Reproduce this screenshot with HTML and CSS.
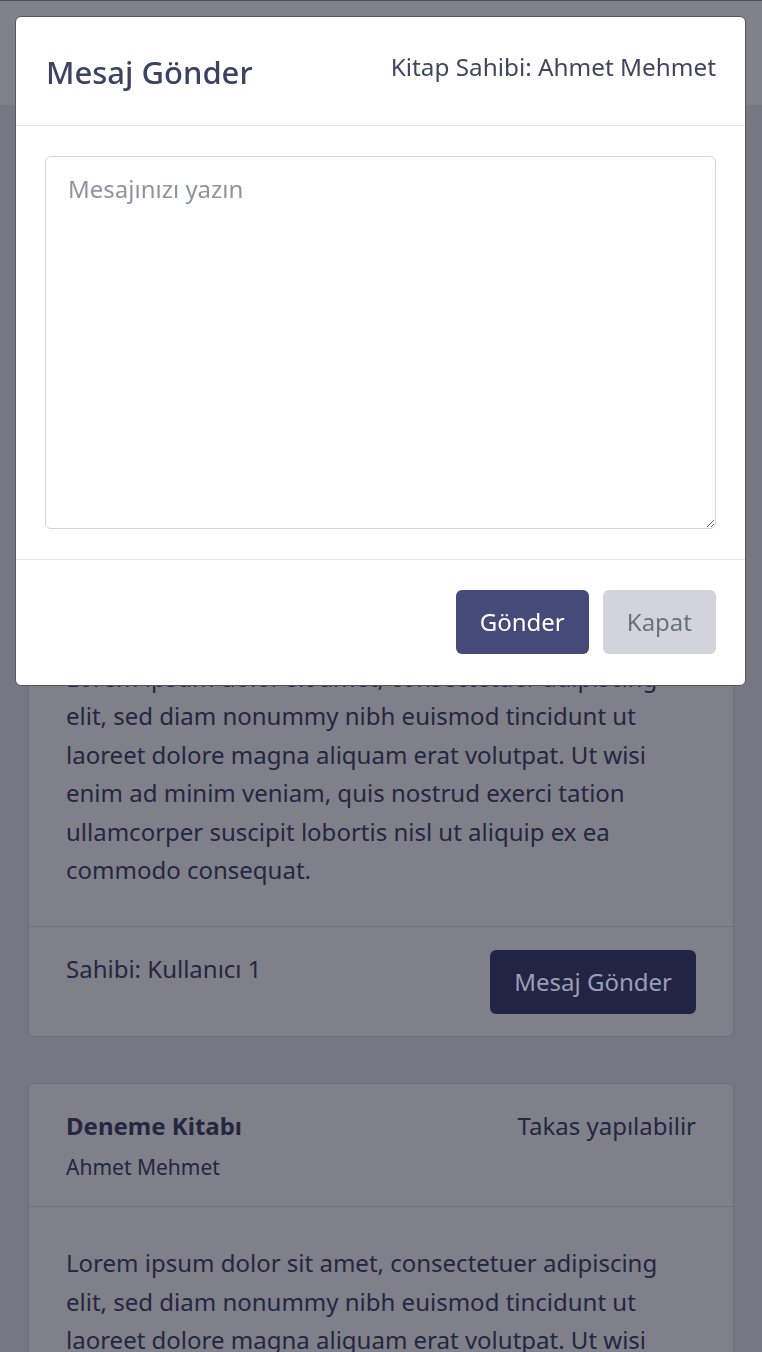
FILE: index.html
```html
<!DOCTYPE html>
<html lang="tr">
<head>
<meta charset="utf-8">
<title>Kitaplar</title>
<link rel="stylesheet" href="styles.css">
</head>
<body>
<header class="topbar"></header>
<main class="list">
  <article class="card">
    <div class="card-head">
      <div>
        <div class="book-title">Deneme Kitabı</div>
        <div class="book-author">Ahmet Mehmet</div>
      </div>
      <div class="book-status">Takas yapılabilir</div>
    </div>
    <div class="card-body">
      <p>Lorem ipsum dolor sit amet, consectetuer adipiscing elit, sed diam nonummy nibh euismod tincidunt ut laoreet dolore magna aliquam erat volutpat. Ut wisi enim ad minim veniam, quis nostrud exerci tation ullamcorper suscipit lobortis nisl ut aliquip ex ea commodo consequat.</p>
    </div>
    <div class="card-foot">
      <span class="owner">Sahibi: Kullanıcı 1</span>
      <button class="btn-dark" type="button">Mesaj Gönder</button>
    </div>
  </article>
  <article class="card">
    <div class="card-head">
      <div>
        <div class="book-title">Deneme Kitabı</div>
        <div class="book-author">Ahmet Mehmet</div>
      </div>
      <div class="book-status">Takas yapılabilir</div>
    </div>
    <div class="card-body">
      <p>Lorem ipsum dolor sit amet, consectetuer adipiscing elit, sed diam nonummy nibh euismod tincidunt ut laoreet dolore magna aliquam erat volutpat. Ut wisi enim ad minim veniam, quis nostrud exerci tation ullamcorper suscipit lobortis nisl ut aliquip ex ea commodo consequat.</p>
    </div>
    <div class="card-foot">
      <span class="owner">Sahibi: Kullanıcı 1</span>
      <button class="btn-dark" type="button">Mesaj Gönder</button>
    </div>
  </article>
</main>

<div class="modal">
  <div class="modal-head">
    <h2 class="modal-title">Mesaj Gönder</h2>
    <div class="modal-owner">Kitap Sahibi: Ahmet Mehmet</div>
  </div>
  <div class="modal-body">
    <textarea class="message" placeholder="Mesajınızı yazın"></textarea>
  </div>
  <div class="modal-foot">
    <button class="btn-primary" type="button">Gönder</button>
    <button class="btn-light" type="button">Kapat</button>
  </div>
</div>
</body>
</html>
```
FILE: styles.css
```css
html { overflow: hidden; }
body {
  margin: 0;
  background: #777784;
  font-family: "Noto Sans", "Open Sans", sans-serif;
  font-size: 24px;
  line-height: 1.6;
  color: #24273f;
}
.topbar {
  height: 104px;
  background: #81818c;
  border-top: 1px solid #4c4c5a;
}
.list {
  padding: 393px 28px 40px;
  display: flex;
  flex-direction: column;
  gap: 46px;
}
.card {
  background: #80808a;
  border: 1px solid #6e6e7b;
  border-radius: 6px;
}
.card-head {
  display: flex;
  justify-content: space-between;
  align-items: flex-start;
  padding: 23px 37px 22px;
  border-bottom: 1px solid #6e6e7b;
}
.book-title { font-weight: 700; }
.book-author { font-size: 21px; margin-top: 5px; }
.card-body { padding: 37px; }
.card-body p { margin: 0; }
.card-foot {
  display: flex;
  justify-content: space-between;
  align-items: flex-start;
  padding: 23px 37px 22px;
  border-top: 1px solid #6e6e7b;
}
.btn-dark {
  font: inherit;
  line-height: 36px;
  padding: 14px 24px;
  border: 0;
  border-radius: 6px;
  background: #222446;
  color: #9c9eb2;
}

.modal {
  position: fixed;
  top: 16px;
  left: 15px;
  right: 16px;
  background: #fff;
  border: 1px solid #55555f;
  border-radius: 6px;
  color: #40475f;
}
.modal-head {
  display: flex;
  justify-content: space-between;
  align-items: flex-start;
  padding: 32px 29px 31px 30px;
  border-bottom: 1px solid #e2e4e9;
}
.modal-title {
  margin: 1px 0 -1px;
  font-size: 31px;
  font-weight: 500;
  line-height: 45px;
  color: #3c4360;
}
.modal-owner {
  font-size: 24.3px;
  line-height: 36px;
}
.modal-body { padding: 30px 29px; }
.message {
  display: block;
  box-sizing: border-box;
  width: 100%;
  height: 373px;
  margin: 0;
  padding: 14px 22px;
  font: inherit;
  line-height: 36px;
  color: #374151;
  border: 1px solid #d3d6dc;
  border-radius: 6px;
  background: #fff;
}
.message::placeholder { color: #8f94a3; }
.modal-foot {
  display: flex;
  justify-content: flex-end;
  gap: 14px;
  padding: 30px 29px 31px;
  border-top: 1px solid #e2e4e9;
}
.btn-primary, .btn-light {
  font: inherit;
  line-height: 36px;
  padding: 14px 24px;
  border: 0;
  border-radius: 6px;
}
.btn-primary { background: #464a78; color: #fff; }
.btn-light { background: #d1d4db; color: #6b7080; }
```
